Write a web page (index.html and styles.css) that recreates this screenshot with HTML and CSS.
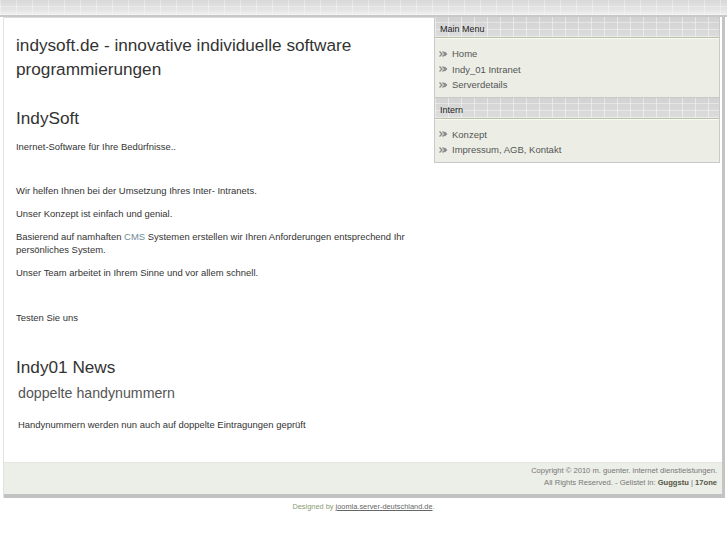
FILE: index.html
```html
<!DOCTYPE html>
<html lang="de">
<head>
<meta charset="utf-8">
<title>indysoft.de</title>
<link rel="stylesheet" href="styles.css">
</head>
<body>
<div class="topbar"></div>
<div class="page">
  <div class="columns">
    <main class="main">
      <h1 class="site-title">indysoft.de - innovative individuelle software programmierungen</h1>
      <h2 class="heading">IndySoft</h2>
      <p class="text">Inernet-Software für Ihre Bedürfnisse..</p>
      <p class="text spaced">Wir helfen Ihnen bei der Umsetzung Ihres Inter- Intranets.</p>
      <p class="text">Unser Konzept ist einfach und genial.</p>
      <p class="text">Basierend auf namhaften <a class="accent" href="#">CMS</a> Systemen erstellen wir Ihren Anforderungen entsprechend Ihr<br>persönliches System.</p>
      <p class="text">Unser Team arbeitet in Ihrem Sinne und vor allem schnell.</p>
      <p class="text spaced2">Testen Sie uns</p>
      <h2 class="heading news">Indy01 News</h2>
      <h3 class="subheading">doppelte handynummern</h3>
      <p class="text indent">Handynummern werden nun auch auf doppelte Eintragungen geprüft</p>
    </main>
    <aside class="sidebar">
      <div class="module">
        <div class="module-head">Main Menu</div>
        <ul class="module-body">
          <li><svg class="arrow" viewBox="0 0 9 6" aria-hidden="true"><path d="M0.5 0.5 L3 3 L0.5 5.5 M3.5 0.5 L6 3 L3.5 5.5 M5.5 1 L7.5 3 L5.5 5"/></svg>Home</li>
          <li><svg class="arrow" viewBox="0 0 9 6" aria-hidden="true"><path d="M0.5 0.5 L3 3 L0.5 5.5 M3.5 0.5 L6 3 L3.5 5.5 M5.5 1 L7.5 3 L5.5 5"/></svg>Indy_01 Intranet</li>
          <li><svg class="arrow" viewBox="0 0 9 6" aria-hidden="true"><path d="M0.5 0.5 L3 3 L0.5 5.5 M3.5 0.5 L6 3 L3.5 5.5 M5.5 1 L7.5 3 L5.5 5"/></svg>Serverdetails</li>
        </ul>
      </div>
      <div class="module">
        <div class="module-head">Intern</div>
        <ul class="module-body">
          <li><svg class="arrow" viewBox="0 0 9 6" aria-hidden="true"><path d="M0.5 0.5 L3 3 L0.5 5.5 M3.5 0.5 L6 3 L3.5 5.5 M5.5 1 L7.5 3 L5.5 5"/></svg>Konzept</li>
          <li><svg class="arrow" viewBox="0 0 9 6" aria-hidden="true"><path d="M0.5 0.5 L3 3 L0.5 5.5 M3.5 0.5 L6 3 L3.5 5.5 M5.5 1 L7.5 3 L5.5 5"/></svg>Impressum, AGB, Kontakt</li>
        </ul>
      </div>
    </aside>
  </div>
  <footer class="footer">
    <div>Copyright &copy; 2010 m. guenter. internet dienstleistungen.</div>
    <div>All Rights Reserved. - Gelistet in: <b>Guggstu</b> | <b>17one</b></div>
  </footer>
</div>
<div class="credit">Designed by <a href="#">joomla.server-deutschland.de</a>.</div>
</body>
</html>
```
FILE: styles.css
```css
html, body {
  margin: 0;
  padding: 0;
  background: #ffffff;
  font-family: "Liberation Sans", Arial, sans-serif;
  color: #333333;
}
.topbar {
  height: 15px;
  background:
    repeating-linear-gradient(90deg, rgba(255,255,255,0.35) 0 1px, transparent 1px 16px),
    repeating-linear-gradient(0deg, rgba(255,255,255,0.3) 0 1px, transparent 1px 8px),
    linear-gradient(#d8d8d8, #e6e6e6 70%, #f0f0f0);
  border-bottom: 2px solid #c8c8c8;
}
.page {
  margin: 0 2px 0 3px;
  border-left: 1px solid #e2e2e2;
  border-right: 3px solid #c4c4c4;
  background: #ffffff;
}
.columns {
  display: flex;
}
.main {
  width: 430px;
  padding: 15px 0 31px 12px;
  box-sizing: border-box;
  border-top: 1px solid #dcdcdc;
}
.site-title {
  margin: 0;
  font-size: 17.2px;
  font-weight: normal;
  line-height: 24px;
  color: #333333;
}
.heading {
  margin: 25px 0 0 0;
  font-size: 17.2px;
  font-weight: normal;
  line-height: 24px;
  color: #333333;
}
.heading.news {
  margin-top: 31px;
}
.subheading {
  margin: 4px 0 0 2px;
  font-size: 14.2px;
  font-weight: normal;
  line-height: 20px;
  color: #555555;
}
.text {
  margin: 10px 0 0 0;
  font-size: 9.45px;
  line-height: 13px;
  color: #333333;
}
.text.spaced { margin-top: 31px; }
.text.spaced2 { margin-top: 32px; }
.text.indent { margin: 15px 0 0 2px; }
.accent { color: #6f8a9a; text-decoration: none; }
.sidebar {
  flex: 1;
  background: #ffffff;
}
.module {
  border: 1px solid #c9c9c9;
  border-top: 0;
  margin-right: 2px;
}
.module-head {
  height: 20px;
  line-height: 25px;
  overflow: hidden;
  padding-left: 5px;
  font-size: 9px;
  color: #222222;
  background:
    repeating-linear-gradient(90deg, rgba(255,255,255,0.45) 0 1px, transparent 1px 13px),
    repeating-linear-gradient(0deg, rgba(255,255,255,0.4) 0 1px, transparent 1px 7px),
    linear-gradient(#d2d2d2, #dcdcdc);
  border-bottom: 1px solid #b9c4a6;
}
.module-body {
  list-style: none;
  margin: 0;
  padding: 7px 0 4px 4px;
  background: #eceee6;
  border-top: 1px solid #f8f8f4;
}
.module-body li {
  display: flex;
  align-items: center;
  font-size: 9.5px;
  line-height: 15.5px;
  color: #555555;
}
.arrow {
  width: 9px;
  height: 6px;
  margin-right: 4px;
  fill: none;
  stroke: #8a8a8a;
  stroke-width: 1.3;
}
.footer {
  background: #eceee8;
  border-top: 1px solid #e4e6df;
  border-bottom: 4px solid #c2c2c2;
  text-align: right;
  padding: 2px 5px 5px 0;
  font-size: 7.6px;
  line-height: 12px;
  color: #777777;
}
.footer b { color: #555544; }
.credit {
  text-align: center;
  margin-top: 4px;
  font-size: 7.4px;
  color: #8a9a72;
}
.credit a { color: #666666; }
```
